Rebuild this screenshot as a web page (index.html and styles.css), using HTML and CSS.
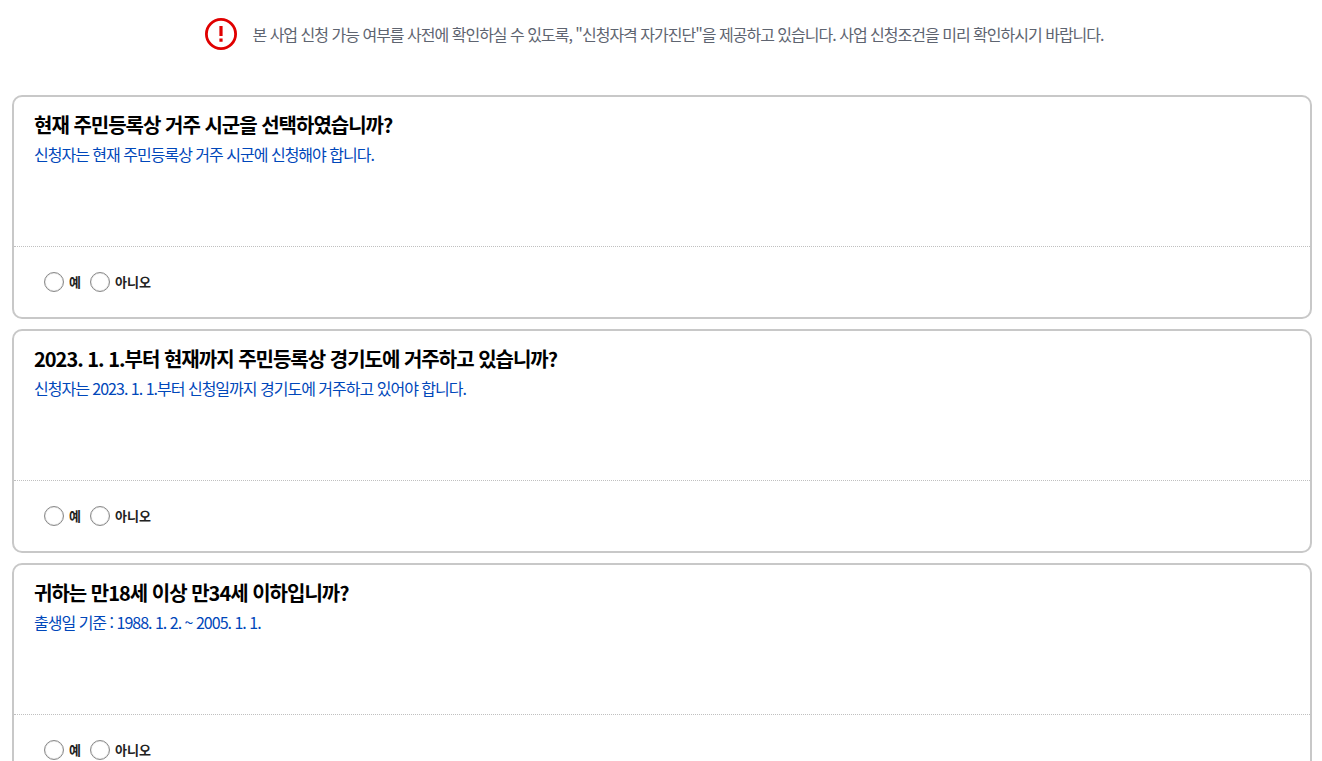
FILE: index.html
```
<!DOCTYPE html>
<html lang="ko">
<head>
  <meta charset="UTF-8">
  <title>신청자격 자가진단</title>
  <link rel="stylesheet" href="styles.css">
</head>
<body>
  <div class="notice">
    <svg class="notice-icon" viewBox="0 0 32 32" aria-hidden="true">
      <circle cx="16" cy="16" r="14.6" fill="none" stroke="#e00000" stroke-width="2.8"/>
      <path d="M14.4 8h3.2v10h-3.2zM14.4 20.5h3.2v3.3h-3.2z" fill="#e00000"/>
    </svg>
    <p>본 사업 신청 가능 여부를 사전에 확인하실 수 있도록, "신청자격 자가진단"을 제공하고 있습니다. 사업 신청조건을 미리 확인하시기 바랍니다.</p>
  </div>

  <form class="check-list">
    <section class="check-item">
      <div class="question">
        <h2>현재 주민등록상 거주 시군을 선택하였습니까?</h2>
        <p>신청자는 현재 주민등록상 거주 시군에 신청해야 합니다.</p>
      </div>
      <div class="answer">
        <input type="radio" name="q1" id="q1_y" value="Y"><label for="q1_y">예</label>
        <input type="radio" name="q1" id="q1_n" value="N"><label for="q1_n">아니오</label>
      </div>
    </section>

    <section class="check-item">
      <div class="question">
        <h2>2023. 1. 1.부터 현재까지 주민등록상 경기도에 거주하고 있습니까?</h2>
        <p>신청자는 2023. 1. 1.부터 신청일까지 경기도에 거주하고 있어야 합니다.</p>
      </div>
      <div class="answer">
        <input type="radio" name="q2" id="q2_y" value="Y"><label for="q2_y">예</label>
        <input type="radio" name="q2" id="q2_n" value="N"><label for="q2_n">아니오</label>
      </div>
    </section>

    <section class="check-item">
      <div class="question">
        <h2>귀하는 만18세 이상 만34세 이하입니까?</h2>
        <p>출생일 기준 : 1988. 1. 2. ~ 2005. 1. 1.</p>
      </div>
      <div class="answer">
        <input type="radio" name="q3" id="q3_y" value="Y"><label for="q3_y">예</label>
        <input type="radio" name="q3" id="q3_n" value="N"><label for="q3_n">아니오</label>
      </div>
    </section>
  </form>
</body>
</html>
```
FILE: styles.css
```
* {
  box-sizing: border-box;
}

body {
  margin: 0;
  padding: 18px 10px 12px 12px;
  font-family: "Noto Sans CJK KR", sans-serif;
  font-size: 16px;
  letter-spacing: -1px;
  color: #5e6470;
}

h2, p {
  margin: 0;
}

.notice {
  display: flex;
  justify-content: center;
  align-items: center;
  gap: 15px;
  padding-right: 15px;
  margin-bottom: 45px;
}

.notice-icon {
  width: 32px;
  height: 32px;
  flex: none;
}

.notice p {
  line-height: 32px;
}

.check-list {
  display: flex;
  flex-direction: column;
  gap: 10px;
}

.check-item {
  border: 2px solid #c8c8c8;
  border-radius: 10px;
}

.question {
  min-height: 150px;
  padding: 13px 20px;
  border-bottom: 1px dotted #c0c0c0;
}

.question h2 {
  font-size: 20px;
  line-height: 30px;
  font-weight: 700;
  color: #000;
}

.question p {
  line-height: 28px;
  color: #0047ba;
}

.answer {
  display: flex;
  align-items: center;
  height: 70px;
  padding: 0 30px;
  font-size: 13px;
  line-height: 20px;
  font-weight: 700;
  letter-spacing: 0;
  color: #222;
}

.answer input {
  appearance: none;
  width: 20px;
  height: 20px;
  margin: 0 5px 0 0;
  border: 1px solid #8a8a8a;
  border-radius: 50%;
  background: #fff;
  box-shadow: inset 0 0 1px #999;
}

.answer input:checked {
  border: 6px solid #0047ba;
}

.answer label {
  margin-right: 9px;
}
```
